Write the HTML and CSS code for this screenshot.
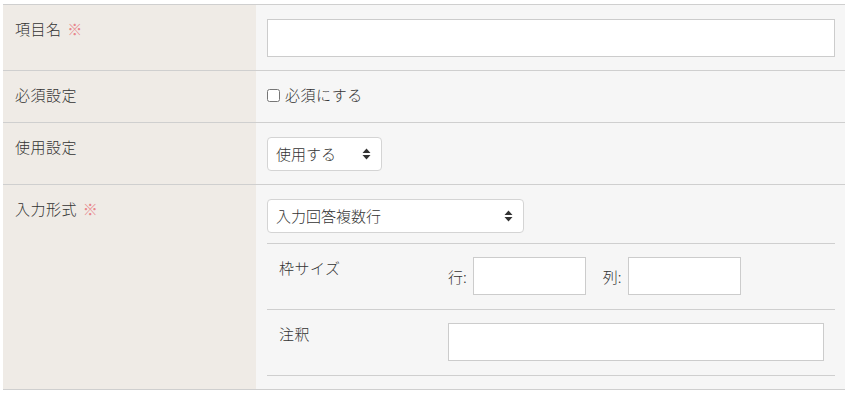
FILE: index.html
```html
<!DOCTYPE html>
<html lang="ja">
<head>
    <meta charset="UTF-8">
    <meta name="viewport" content="width=device-width, initial-scale=1.0">
    <title>項目設定</title>
    <link rel="stylesheet" href="styles.css">
</head>
<body>
    <div class="form-table">
        <div class="row">
            <div class="label">項目名 <span class="req">※</span></div>
            <div class="field">
                <input type="text" class="text-input wide">
            </div>
        </div>
        <div class="row">
            <div class="label">必須設定</div>
            <div class="field check-field">
                <label class="check"><input type="checkbox"> 必須にする</label>
            </div>
        </div>
        <div class="row">
            <div class="label">使用設定</div>
            <div class="field">
                <span class="select-wrap use-select">
                    <select><option>使用する</option><option>使用しない</option></select>
                    <svg class="arrows" width="9" height="12" viewBox="0 0 9 12"><path d="M4.5 0.5 L8.5 5 H0.5 Z M4.5 11.5 L8.5 7 H0.5 Z" fill="#333"/></svg>
                </span>
            </div>
        </div>
        <div class="row">
            <div class="label">入力形式 <span class="req">※</span></div>
            <div class="field">
                <span class="select-wrap type-select">
                    <select><option>入力回答複数行</option><option>入力回答1行</option></select>
                    <svg class="arrows" width="9" height="12" viewBox="0 0 9 12"><path d="M4.5 0.5 L8.5 5 H0.5 Z M4.5 11.5 L8.5 7 H0.5 Z" fill="#333"/></svg>
                </span>
                <div class="sub-table">
                    <div class="sub-row">
                        <div class="sub-label">枠サイズ</div>
                        <div class="sub-field">
                            <span class="unit">行:</span><input type="text" class="text-input size">
                            <span class="unit col">列:</span><input type="text" class="text-input size">
                        </div>
                    </div>
                    <div class="sub-row">
                        <div class="sub-label">注釈</div>
                        <div class="sub-field">
                            <input type="text" class="text-input note">
                        </div>
                    </div>
                </div>
            </div>
        </div>
    </div>
</body>
</html>
```

FILE: styles.css
```css
body {
    margin: 0;
    padding: 4px 3px 0 3px;
    background: #fff;
    font-family: "Noto Sans CJK JP", "Noto Sans", sans-serif;
    font-size: 15px;
    font-weight: 300;
    letter-spacing: 0.5px;
    color: #333;
}
.form-table {
    border-top: 1px solid #cfcfcf;
}
.row {
    display: grid;
    grid-template-columns: 253px 1fr;
    border-bottom: 1px solid #cfcfcf;
}
.label {
    background: #efebe6;
    padding: 12px 12px;
    line-height: 24px;
}
.req {
    color: #e8868b;
    margin-left: 2px;
}
.field {
    background: #f6f6f6;
    padding: 14px 10px 13px 11px;
    line-height: 24px;
}
.check-field {
    padding-top: 12px;
    padding-bottom: 15px;
}
.text-input {
    box-sizing: border-box;
    height: 38px;
    border: 1px solid #cccccc;
    background: #fff;
    font: inherit;
    padding: 0 8px;
    margin: 0;
    vertical-align: middle;
}
.wide {
    display: block;
    width: 100%;
}
.check {
    display: flex;
    align-items: center;
    gap: 5px;
}
.check input {
    margin: 0;
    width: 13px;
    height: 13px;
}
.select-wrap {
    position: relative;
    display: inline-block;
    vertical-align: top;
}
.select-wrap select {
    appearance: none;
    -webkit-appearance: none;
    box-sizing: border-box;
    height: 34px;
    border: 1px solid #d4d4d4;
    border-radius: 4px;
    background: #fff;
    color: #333;
    font: inherit;
    padding: 0 30px 0 8px;
    margin: 0;
    display: block;
}
.use-select select {
    width: 115px;
}
.type-select select {
    width: 257px;
}
.arrows {
    position: absolute;
    right: 11px;
    top: 11px;
    pointer-events: none;
}
.sub-table {
    margin-top: 10px;
    border-top: 1px solid #cfcfcf;
}
.sub-row {
    display: grid;
    grid-template-columns: 169px 1fr;
    border-bottom: 1px solid #cfcfcf;
}
.sub-label {
    padding: 12px 12px;
    line-height: 24px;
}
.sub-field {
    padding: 13px 11px 14px 12px;
    display: flex;
    align-items: center;
}
.unit {
    margin-right: 6px;
    margin-top: 2px;
    letter-spacing: 0;
}
.unit.col {
    margin-left: 17px;
}
.size {
    width: 113px;
}
.note {
    width: 100%;
}
```
